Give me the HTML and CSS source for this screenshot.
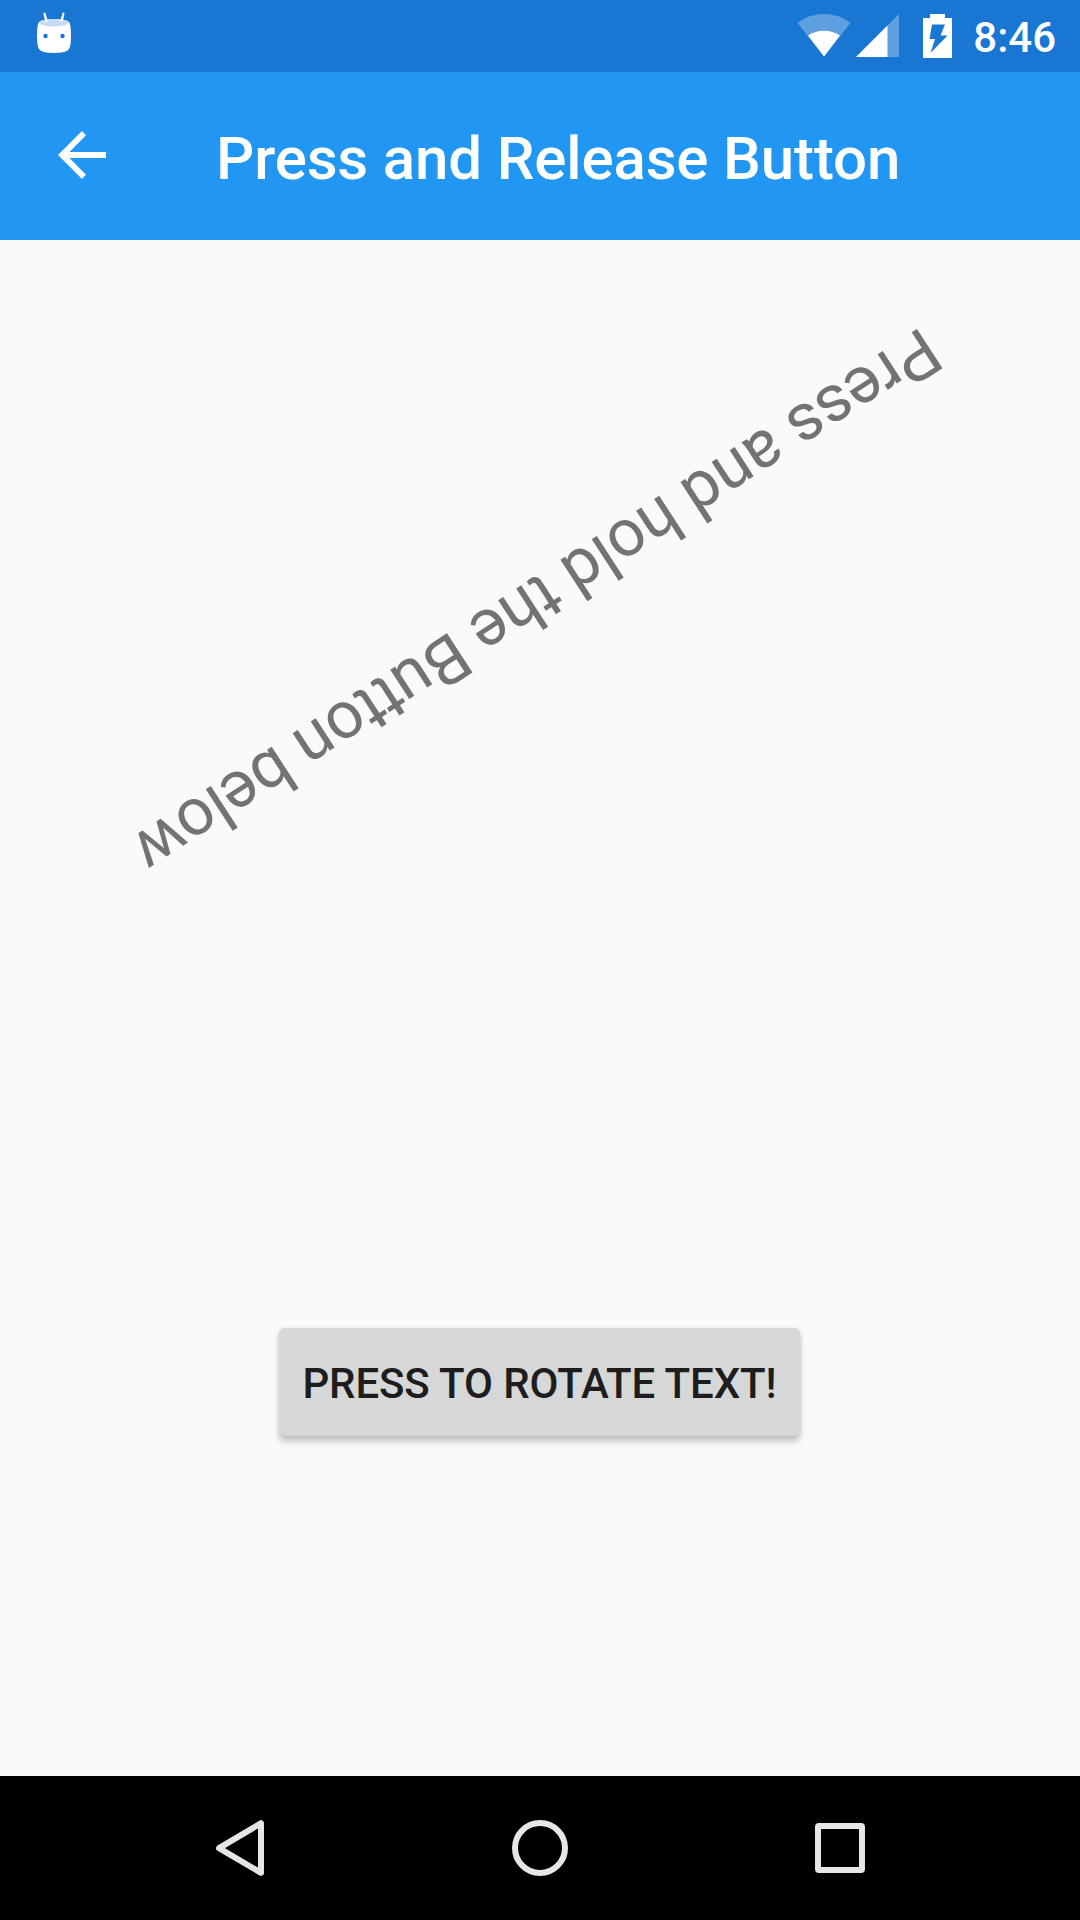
FILE: index.html
```html
<!DOCTYPE html>
<html lang="en">
<head>
<meta charset="utf-8">
<title>Press and Release Button</title>
<link rel="stylesheet" href="styles.css">
</head>
<body>
<div class="screen">
  <header class="status-bar">
    <svg class="status-notification" width="36" height="42" viewBox="0 0 36 42">
      <path d="M8.500 1.500L10.500 9M27.500 1.500L25.500 9" stroke="#fff" stroke-width="2" stroke-linecap="round"/>
      <path d="M3 10Q1 12 1 23Q1 34 3 37Q5 41 18 41Q31 41 33 37Q35 34 35 23Q35 12 33 10Q30 7 18 7Q6 7 3 10Z" fill="#fff"/>
      <ellipse cx="18" cy="10.700" rx="14.500" ry="3.800" fill="#c5daf4"/>
      <path d="M8.800 3L10.500 9M27.200 3L25.500 9" stroke="#fff" stroke-width="2" stroke-linecap="round"/>
      <circle cx="9.500" cy="24" r="2.200" fill="#1976d2"/>
      <circle cx="26.500" cy="24" r="2.200" fill="#1976d2"/>
    </svg>
    <div class="status-icons">
      <svg class="status-wifi" width="54" height="44" viewBox="0 0 54 44">
        <path d="M.5 10Q12 1 27 1T53.500 10L27 43.500Z" fill="#fff" fill-opacity=".3"/>
        <path d="M11 22.500Q18 17.800 27 17.800T43 22.500L27 43.500Z" fill="#fff"/>
      </svg>
      <svg class="status-signal" width="43" height="43" viewBox="0 0 43 43">
        <path d="M43 0V43H0Z" fill="#fff" fill-opacity=".3"/>
        <path d="M31.500 11.500V43H0Z" fill="#fff"/>
      </svg>
      <svg class="status-battery" width="29" height="44" viewBox="0 0 29 44">
        <path fill-rule="evenodd" fill="#fff" d="M7 0H22V4H29V44H0V4H7ZM9 10.500L6.500 25H12L7.500 39L24.500 21.500H17.500L22 10.500Z"/>
      </svg>
      <span class="clock">8:46</span>
    </div>
  </header>
  <div class="toolbar">
    <svg class="back" width="48" height="48" viewBox="0 0 48 48">
      <path d="M48 21H11.500L28 4.200L24 0L0 24L24 48L28 43.800L11.500 27H48Z" fill="#fff"/>
    </svg>
    <h1 class="title">Press and Release Button</h1>
  </div>
  <main class="content">
    <div class="cell"><p class="rotated">Press and hold the Button below</p></div>
    <div class="cell cell-button"><button class="press-button">PRESS TO ROTATE TEXT!</button></div>
  </main>
  <nav class="nav-bar">
    <svg width="60" height="60" viewBox="0 0 60 60" fill="none" stroke="#e6e6e6" stroke-width="6" stroke-linejoin="round">
      <path d="M51 5.200V54.800L9 30.200Z"/>
    </svg>
    <svg width="60" height="60" viewBox="0 0 60 60" fill="none" stroke="#e6e6e6" stroke-width="6">
      <circle cx="30" cy="30" r="25"/>
    </svg>
    <svg width="60" height="60" viewBox="0 0 60 60" fill="none" stroke="#e6e6e6" stroke-width="6" stroke-linejoin="round">
      <rect x="8" y="8" width="44" height="44" rx="1"/>
    </svg>
  </nav>
</div>
</body>
</html>
```
FILE: styles.css
```css
* {
  box-sizing: border-box;
}

body {
  margin: 0;
  font-family: Roboto, sans-serif;
}

svg {
  display: block;
  flex: none;
}

.screen {
  display: flex;
  flex-direction: column;
  width: 1080px;
  height: 1920px;
  overflow: hidden;
  background: #fafafa;
}

.status-bar {
  display: flex;
  justify-content: space-between;
  height: 72px;
  padding: 0 24px 0 36px;
  background: #1976d2;
  color: #fff;
}

.status-notification {
  margin-top: 12px;
}

.status-icons {
  display: flex;
  align-items: flex-start;
}

.status-wifi {
  margin-top: 13px;
}

.status-signal {
  margin: 14px 0 0 5px;
}

.status-battery {
  margin: 14px 0 0 24.500px;
}

.clock {
  margin-left: 21px;
  font-size: 42px;
  font-weight: 500;
  line-height: 75px;
}

.toolbar {
  display: flex;
  align-items: center;
  height: 168px;
  padding: 0 58px;
  background: #2196f3;
  color: #fff;
}

.back {
  margin-bottom: 2px;
}

.title {
  margin: 6px 0 0 110px;
  font-size: 60px;
  font-weight: 500;
  letter-spacing: -.15px;
  line-height: 70px;
  white-space: nowrap;
}

.content {
  display: flex;
  flex: 1;
  flex-direction: column;
  gap: 18px;
}

.cell {
  display: flex;
  align-items: center;
  justify-content: center;
  height: 725px;
}

.cell-button {
  flex: 1;
  padding: 4px 1px 0 0;
}

.rotated {
  margin: 0 5px 2px 0;
  color: #737373;
  font-size: 66px;
  letter-spacing: -.1px;
  line-height: 77px;
  white-space: nowrap;
  transform: rotate(147.07deg);
}

.press-button {
  width: 521px;
  height: 108px;
  padding: 5px 0 0;
  border: 0;
  border-radius: 6px;
  background: #d6d7d7;
  box-shadow: 0 6px 6px rgba(0, 0, 0, .2), 0 0 4px rgba(0, 0, 0, .1);
  color: #1d1d1d;
  font: 500 42px/50px Roboto, sans-serif;
  letter-spacing: -.1px;
  white-space: nowrap;
}

.nav-bar {
  display: flex;
  align-items: center;
  justify-content: center;
  gap: 240px;
  height: 144px;
  background: #000;
}
```
